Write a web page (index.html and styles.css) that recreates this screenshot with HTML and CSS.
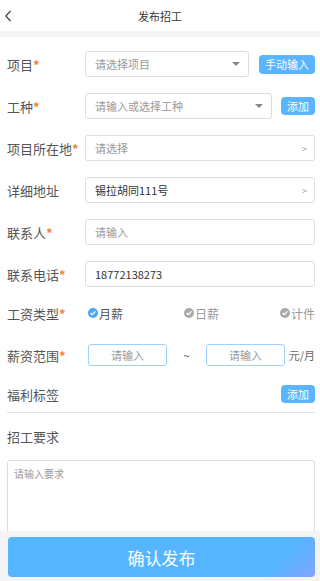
FILE: index.html
```html
<!DOCTYPE html>
<html lang="zh-CN">
<head>
<meta charset="utf-8">
<title>发布招工</title>
<link rel="stylesheet" href="styles.css">
</head>
<body>
<div class="header">
  <svg class="back" width="8" height="12" viewBox="0 0 8 12"><path d="M6.5 1 L1.8 6 L6.5 11" fill="none" stroke="#444" stroke-width="1.3"/></svg>
  <div class="title">发布招工</div>
</div>
<div class="band"></div>
<div class="form">
  <div class="row">
    <div class="label">项目<span class="req">*</span></div>
    <div class="field w164"><span class="ph">请选择项目</span><span class="tri"></span></div>
    <div class="btn btn-wide">手动输入</div>
  </div>
  <div class="row">
    <div class="label">工种<span class="req">*</span></div>
    <div class="field w187"><span class="ph">请输入或选择工种</span><span class="tri"></span></div>
    <div class="btn btn-small">添加</div>
  </div>
  <div class="row">
    <div class="label">项目所在地<span class="req">*</span></div>
    <div class="field grow"><span class="ph">请选择</span><span class="gt">&gt;</span></div>
  </div>
  <div class="row">
    <div class="label">详细地址</div>
    <div class="field grow"><span class="val">锡拉胡同111号</span><span class="gt">&gt;</span></div>
  </div>
  <div class="row">
    <div class="label">联系人<span class="req">*</span></div>
    <div class="field grow"><span class="ph">请输入</span></div>
  </div>
  <div class="row row-phone">
    <div class="label">联系电话<span class="req">*</span></div>
    <div class="field grow"><span class="val">18772138273</span></div>
  </div>
  <div class="row">
    <div class="label">工资类型<span class="req">*</span></div>
    <div class="radios">
      <div class="radio on"><span class="dot"><svg width="10" height="10" viewBox="0 0 10 10"><path d="M2.6 5.1 L4.3 6.6 L7.4 3.4" fill="none" stroke="#fff" stroke-width="1.3"/></svg></span>月薪</div>
      <div class="radio"><span class="dot"><svg width="10" height="10" viewBox="0 0 10 10"><path d="M2.6 5.1 L4.3 6.6 L7.4 3.4" fill="none" stroke="#fff" stroke-width="1.3"/></svg></span>日薪</div>
      <div class="radio"><span class="dot"><svg width="10" height="10" viewBox="0 0 10 10"><path d="M2.6 5.1 L4.3 6.6 L7.4 3.4" fill="none" stroke="#fff" stroke-width="1.3"/></svg></span>计件</div>
    </div>
  </div>
  <div class="row row-salary">
    <div class="label label-salary">薪资范围<span class="req">*</span></div>
    <div class="sal">请输入</div>
    <div class="tilde">~</div>
    <div class="sal">请输入</div>
    <div class="unit">元/月</div>
  </div>
  <div class="row row-tag">
    <div class="label">福利标签</div>
    <div class="btn btn-small">添加</div>
  </div>
  <div class="divider"></div>
  <div class="req-title">招工要求</div>
  <div class="textarea"><span class="ph">请输入要求</span></div>
</div>
<div class="bottom">
  <div class="submit">确认发布</div>
</div>
</body>
</html>
```
FILE: styles.css
```css
* { box-sizing: border-box; }
html, body { margin: 0; padding: 0; }
body {
  width: 320px;
  height: 581px;
  overflow: hidden;
  background: #fff;
  font-family: "Noto Sans CJK SC", "Noto Sans", sans-serif;
  color: #555;
  position: relative;
}
.header {
  height: 31px;
  display: flex;
  align-items: center;
  justify-content: center;
  position: relative;
}
.back { position: absolute; left: 4px; top: 10px; }
.title { font-size: 11px; color: #333; }
.band { height: 6px; background: #f4f4f6; }
.form { padding: 14px 5px 0 7px; }
.row {
  display: flex;
  align-items: center;
  height: 26px;
  margin-bottom: 16px;
}
.label {
  width: 78px;
  flex: none;
  font-size: 13px;
  color: #555;
  white-space: nowrap;
}
.req { color: #f5813a; font-size: 13px; font-weight: bold; }
.field {
  height: 26px;
  border: 1px solid #ddd;
  border-radius: 3px;
  display: flex;
  align-items: center;
  padding: 0 9px;
  position: relative;
  font-size: 11px;
}
.w164 { width: 164px; }
.w187 { width: 187px; }
.grow { flex: 1; }
.ph { color: #999; }
.val { color: #333; }
.tri {
  margin-left: auto;
  width: 0; height: 0;
  border-left: 4px solid transparent;
  border-right: 4px solid transparent;
  border-top: 4px solid #888;
  margin-right: -1px;
}
.gt { margin-left: auto; color: #999; font-size: 9px; margin-right: -2px; }
.btn {
  margin-left: auto;
  background: #5ab4ff;
  color: #fff;
  font-size: 11px;
  border-radius: 4px;
  display: flex;
  align-items: center;
  justify-content: center;
}
.btn-wide { width: 56px; height: 19px; }
.btn-small { width: 34px; height: 18px; }
.row-phone { margin-bottom: 13px; }
.radios { display: flex; flex: 1; justify-content: space-between; padding-left: 3px; }
.radio { display: flex; align-items: center; font-size: 12px; color: #999; }
.radio.on { color: #555; }
.dot {
  width: 10px; height: 10px; border-radius: 50%;
  background: #aaa;
  display: inline-flex;
  margin-right: 1px;
}
.radio.on .dot { background: #4aa8f8; }
.row-salary { margin-bottom: 13px; }
.label-salary { width: 81px; }
.sal {
  width: 79px;
  height: 22px;
  border: 1px solid #9fd0ff;
  border-radius: 3px;
  font-size: 11px;
  color: #999;
  display: flex;
  align-items: center;
  justify-content: center;
}
.tilde { width: 39px; text-align: center; font-size: 11px; color: #555; }
.unit { margin-left: auto; font-size: 11px; color: #666; }
.row-tag { margin-bottom: 5px; }
.divider { height: 1px; background: #e2e2e2; }
.req-title { font-size: 13px; color: #555; height: 47px; display: flex; align-items: center; }
.textarea {
  height: 120px;
  border: 1px solid #ddd;
  border-radius: 3px;
  padding: 5px 6px;
  font-size: 10px;
}
.bottom {
  position: absolute;
  left: 0; right: 0; bottom: 0;
  height: 50px;
  background: #f4f4f6;
  padding: 6px 5px 4px 8px;
}
.submit {
  height: 40px;
  border-radius: 4px;
  background: linear-gradient(135deg, #56b5ff 0%, #56b5ff 85%, #80a4ff 100%);
  color: #fff;
  font-size: 17px;
  display: flex;
  align-items: center;
  justify-content: center;
}
```
